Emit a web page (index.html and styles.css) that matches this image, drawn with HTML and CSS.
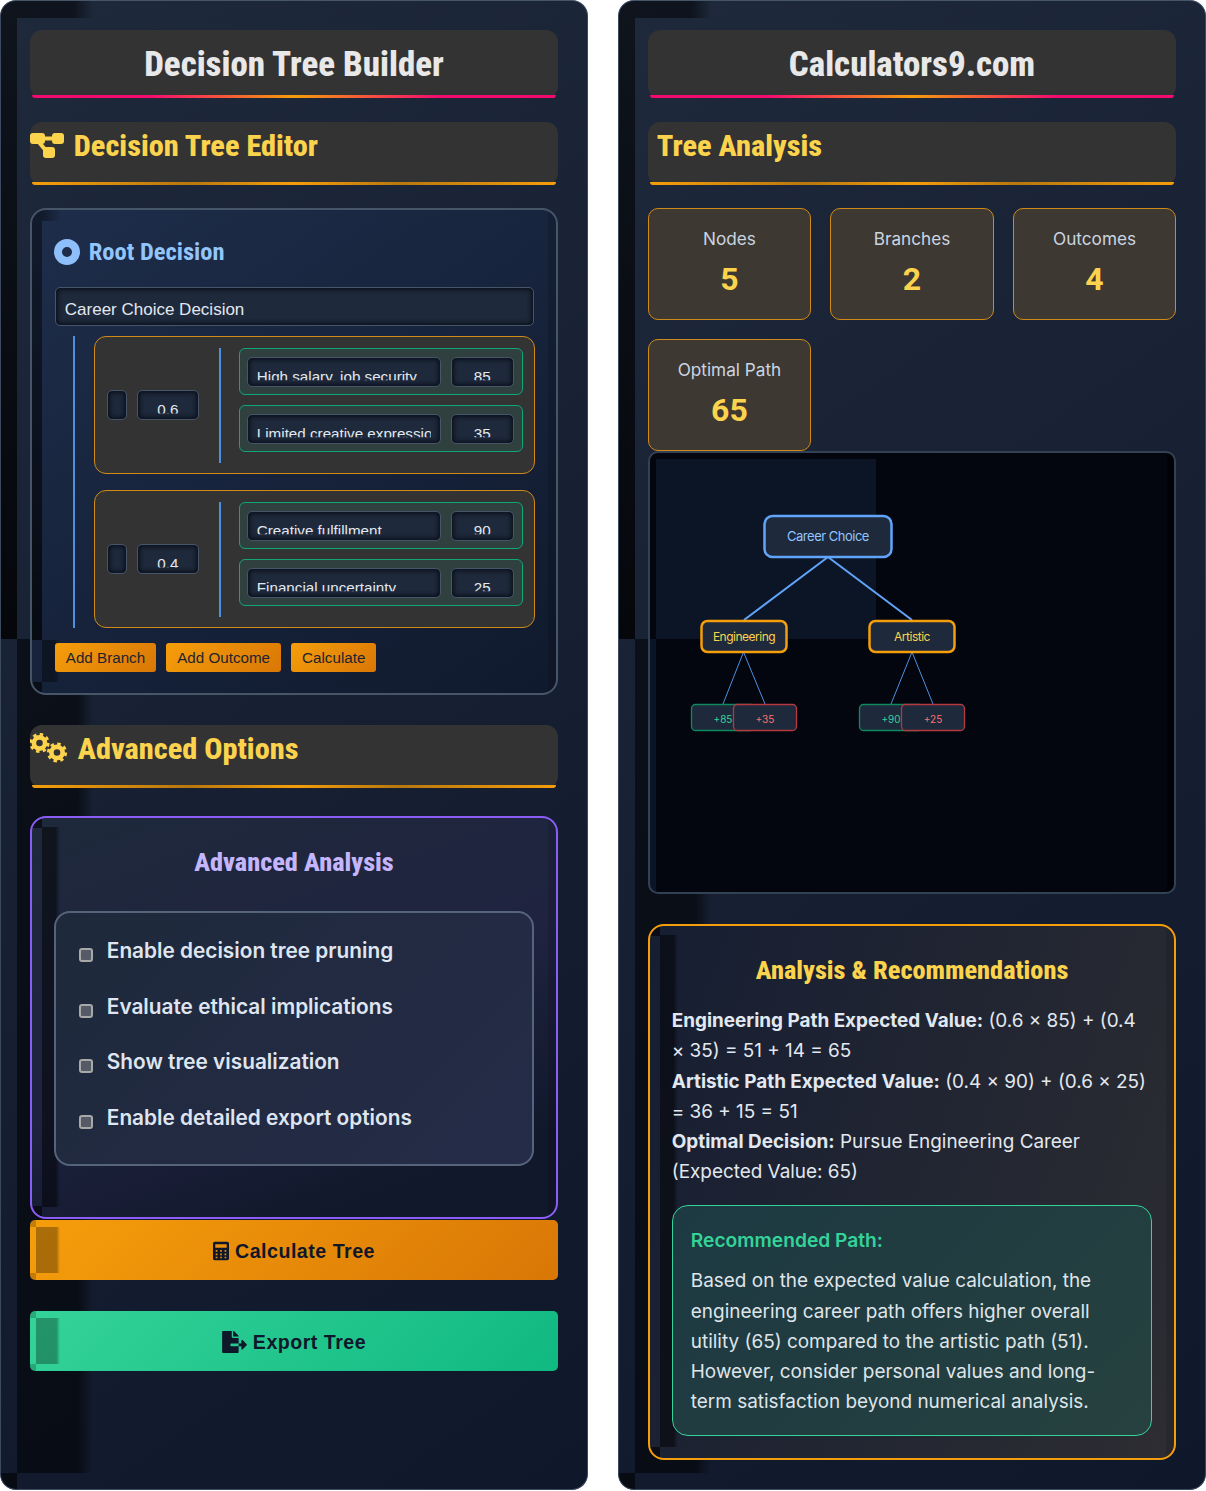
FILE: index.html
```html
<!DOCTYPE html>
<html lang="en">
<head>
	<meta charset="UTF-8">
	<title>Decision Tree Builder</title>
	<link rel="stylesheet" href="styles.css">
</head>
<body>
	<div class="page">
		<section class="panel">
			<h1 class="page-title">Decision Tree Builder</h1>
			<h2 class="section-title">
				<svg class="icon-diagram" viewBox="0 0 34 25">
					<line class="diagram-link" x1="10" y1="5.5" x2="26" y2="5.5"/>
					<line class="diagram-link" x1="8" y1="8" x2="17" y2="19"/>
					<rect x="0" y="0" width="15" height="11" rx="3"/>
					<rect x="22" y="0" width="12" height="11" rx="3"/>
					<rect x="13" y="14" width="12" height="11" rx="3"/>
				</svg>
				Decision Tree Editor
			</h2>

			<div class="tree-card">
				<h3 class="root-title">
					<svg class="icon-dot" viewBox="0 0 26 26"><path fill-rule="evenodd" d="M13 0a13 13 0 1 0 0 26a13 13 0 1 0 0-26zM13 8a5 5 0 1 1 0 10a5 5 0 1 1 0-10z"/></svg>
					Root Decision
				</h3>
				<input class="field-root" type="text" value="Career Choice Decision">
				<div class="branch-list">
					<div class="branch">
						<div class="field field-tiny"><input type="text"></div>
						<div class="field field-prob"><input type="text" value="0.6"></div>
						<div class="outcome-list">
							<div class="outcome">
								<div class="field field-name"><input type="text" value="High salary, job security"></div>
								<div class="field field-num"><input type="text" value="85"></div>
							</div>
							<div class="outcome">
								<div class="field field-name"><input type="text" value="Limited creative expression"></div>
								<div class="field field-num"><input type="text" value="35"></div>
							</div>
						</div>
					</div>
					<div class="branch">
						<div class="field field-tiny"><input type="text"></div>
						<div class="field field-prob"><input type="text" value="0.4"></div>
						<div class="outcome-list">
							<div class="outcome">
								<div class="field field-name"><input type="text" value="Creative fulfillment"></div>
								<div class="field field-num"><input type="text" value="90"></div>
							</div>
							<div class="outcome">
								<div class="field field-name"><input type="text" value="Financial uncertainty"></div>
								<div class="field field-num"><input type="text" value="25"></div>
							</div>
						</div>
					</div>
				</div>
				<div class="tool-row">
					<button class="tool-btn">Add Branch</button>
					<button class="tool-btn">Add Outcome</button>
					<button class="tool-btn">Calculate</button>
				</div>
			</div>

			<h2 class="section-title section-adv">
				<svg class="icon-cogs" viewBox="0 0 38 31">
					<circle class="cog-ring" cx="9.5" cy="10" r="5.6"/>
					<circle class="cog-teeth" cx="9.5" cy="10" r="8.6"/>
					<circle class="cog-ring" cx="27" cy="19.5" r="5.6"/>
					<circle class="cog-teeth" cx="27" cy="19.5" r="8.6"/>
				</svg>
				Advanced Options
			</h2>

			<div class="adv-card">
				<h3 class="adv-title">Advanced Analysis</h3>
				<div class="option-box">
					<label class="option"><input type="checkbox">Enable decision tree pruning</label>
					<label class="option"><input type="checkbox">Evaluate ethical implications</label>
					<label class="option"><input type="checkbox">Show tree visualization</label>
					<label class="option"><input type="checkbox">Enable detailed export options</label>
				</div>
			</div>

			<button class="big-btn btn-calc">
				<svg class="icon-calc" viewBox="0 0 448 512"><path fill-rule="evenodd" d="M48 0H400C426 0 448 22 448 48V464C448 490 426 512 400 512H48C22 512 0 490 0 464V48C0 22 22 0 48 0zM64 64V168H384V64zM76 228V276H124V228zM200 228V276H248V228zM324 228V276H372V228zM76 324V372H124V324zM200 324V372H248V324zM324 324V372H372V324zM76 420V460H124V420zM200 420V460H248V420zM324 420V460H372V420z"/></svg>
				Calculate Tree
			</button>
			<button class="big-btn btn-export">
				<svg class="icon-export" viewBox="0 0 576 512"><path d="M384 121.9c0-6.3-2.5-12.4-7-16.9L279.1 7c-4.5-4.5-10.6-7-17-7H256v128h128v-6.1zM571 308l-95.7-96.4c-10.1-10.1-27.4-3-27.4 11.3V288h-64v64h64v65.2c0 14.3 17.3 21.4 27.4 11.3L571 332c6.6-6.6 6.6-17.4 0-24zm-379 28v-32c0-8.8 7.2-16 16-16h176V160H248c-13.2 0-24-10.8-24-24V0H24C10.7 0 0 10.7 0 24v464c0 13.3 10.7 24 24 24h336c13.3 0 24-10.7 24-24V352H208c-8.8 0-16-7.2-16-16z"/></svg>
				Export Tree
			</button>
		</section>

		<section class="panel">
			<h1 class="page-title">Calculators9.com</h1>
			<h2 class="section-title">Tree Analysis</h2>

			<div class="stat-grid">
				<div class="stat"><div class="stat-label">Nodes</div><div class="stat-value">5</div></div>
				<div class="stat"><div class="stat-label">Branches</div><div class="stat-value">2</div></div>
				<div class="stat"><div class="stat-label">Outcomes</div><div class="stat-value">4</div></div>
				<div class="stat"><div class="stat-label">Optimal Path</div><div class="stat-value">65</div></div>
			</div>

			<div class="tree-view">
				<svg class="tree-svg" viewBox="0 0 524 439">
					<line class="link-main" x1="178" y1="104" x2="94" y2="167"/>
					<line class="link-main" x1="178" y1="104" x2="262" y2="167"/>
					<line class="link-thin" x1="93.5" y1="199" x2="73" y2="251"/>
					<line class="link-thin" x1="93.5" y1="199" x2="115" y2="251"/>
					<line class="link-thin" x1="262" y1="199" x2="241" y2="251"/>
					<line class="link-thin" x1="262" y1="199" x2="283" y2="251"/>
					<rect class="node node-root" x="114.5" y="63" width="127" height="41" rx="8"/>
					<text class="label label-root" x="178" y="88">Career Choice</text>
					<rect class="node node-mid" x="51.5" y="168" width="85" height="31" rx="6"/>
					<text class="label label-mid" x="94" y="188">Engineering</text>
					<rect class="node node-mid" x="219.5" y="168" width="85" height="31" rx="6"/>
					<text class="label label-mid" x="262" y="188">Artistic</text>
					<rect class="node node-good" x="41.5" y="251.5" width="63" height="26" rx="4"/>
					<rect class="node node-bad" x="83.5" y="251.5" width="63" height="26" rx="4"/>
					<text class="label label-good" x="73" y="270">+85</text>
					<text class="label label-bad" x="115" y="270">+35</text>
					<rect class="node node-good" x="209.5" y="251.5" width="63" height="26" rx="4"/>
					<rect class="node node-bad" x="251.5" y="251.5" width="63" height="26" rx="4"/>
					<text class="label label-good" x="241" y="270">+90</text>
					<text class="label label-bad" x="283" y="270">+25</text>
				</svg>
			</div>

			<div class="analysis-card">
				<h3 class="analysis-title">Analysis &amp; Recommendations</h3>
				<p class="analysis-text"><strong>Engineering Path Expected Value:</strong> (0.6 × 85) + (0.4 × 35) = 51 + 14 = 65</p>
				<p class="analysis-text"><strong>Artistic Path Expected Value:</strong> (0.4 × 90) + (0.6 × 25) = 36 + 15 = 51</p>
				<p class="analysis-text"><strong>Optimal Decision:</strong> Pursue Engineering Career (Expected Value: 65)</p>
				<div class="recommend">
					<h4 class="recommend-title">Recommended Path:</h4>
					<p class="recommend-text">Based on the expected value calculation, the engineering career path offers higher overall utility (65) compared to the artistic path (51). However, consider personal values and long-term satisfaction beyond numerical analysis.</p>
				</div>
			</div>
		</section>
	</div>
</body>
</html>
```

FILE: styles.css
```css
* {box-sizing: border-box;}
body,h1,h2,h3,h4,p {margin: 0;padding: 0;}
body {background: #fff;font-family: "Inter", "Liberation Sans", sans-serif;color: #e2e8f0;}

.page {display: grid;grid-template-columns: 588px 588px;gap: 30px;align-items: start;}

/* panel: the dark bands are the broken inset shadow seen in the shot */
.panel {
	height: 1490px;
	padding: 29px 28.8px;
	border: 1px solid #3c4a60;
	border-top-color: #475569;
	border-radius: 16px;
	background-color: #1e293b;
	background-image:
		linear-gradient(rgba(0,0,0,.5), rgba(0,0,0,.8)),
		linear-gradient(90deg, rgba(0,0,0,.5) 75%, transparent),
		linear-gradient(90deg, rgba(0,0,0,.55) 80%, transparent),
		linear-gradient(rgba(0,0,0,.6), rgba(0,0,0,.6)),
		linear-gradient(145deg, #1e293b, #0f172a);
	background-size: 16px 638px, 76px 17px, 76px 834px, 16px 17px, 100% 100%;
	background-position: 0 0, 16px 0, 16px 638px, 0 1472px, 0 0;
	background-repeat: no-repeat;
}

.page-title {
	position: relative;
	height: 68px;
	margin-bottom: 24px;
	padding-top: 12px;
	border-radius: 12px;
	background: #333;
	text-align: center;
	font: 800 34.9px/46px "Roboto Condensed", "Roboto", sans-serif;
	font-stretch: condensed;
	color: #e8e8e8;
}
.page-title::after {
	content: "";
	position: absolute;
	left: 2px;
	right: 2px;
	bottom: 0;
	height: 3px;
	border-radius: 0 0 6px 6px;
	background: linear-gradient(90deg, #f50a70, #f50a70 22%, #f59e0b 50%, #f50a70 78%, #f50a70);
}

.section-title {
	position: relative;
	display: flex;
	align-items: flex-start;
	height: 63px;
	margin-bottom: 23px;
	padding: 5px 9px 0;
	border-radius: 12px;
	background: #333;
	font: 800 30.3px/38px "Roboto Condensed", "Roboto", sans-serif;
	font-stretch: condensed;
	color: #fcd34d;
}
.section-title::after {
	content: "";
	position: absolute;
	left: 2px;
	right: 2px;
	bottom: 0;
	height: 3px;
	border-radius: 0 0 6px 6px;
	background: linear-gradient(90deg, #f59e0b, #b8780f 30%, #f59e0b 50%, #b8780f 70%, #f59e0b);
}
.section-adv {margin-bottom: 28px;}
.icon-diagram {width: 34px;height: 25px;margin: 6px 10px 0 -9px;fill: #fcd34d;flex: none;}
.diagram-link {stroke: #fcd34d;stroke-width: 4;}
.icon-cogs {width: 38px;height: 31px;margin: 3px 10px 0 -9px;flex: none;}
.cog-ring {fill: none;stroke: #fcd34d;stroke-width: 4.6;}
.cog-teeth {fill: none;stroke: #fcd34d;stroke-width: 3;stroke-dasharray: 3.4 3.35;}

/* tree editor card */
.tree-card {
	height: 487px;
	margin-bottom: 30px;
	padding: 29px 21px 0 23px;
	border: 2px solid #475569;
	border-radius: 16px;
	background-color: #1e293b;
	background-image:
		linear-gradient(rgba(0,0,0,.4), rgba(0,0,0,.7)),
		linear-gradient(90deg, rgba(0,0,0,.4), transparent),
		linear-gradient(90deg, rgba(0,0,0,.4) 70%, transparent),
		linear-gradient(rgba(0,0,0,.15), rgba(0,0,0,.15)),
		linear-gradient(rgba(0,0,0,.6), rgba(0,0,0,.6)),
		linear-gradient(145deg, #1e2d4a, #101a2e);
	background-size: 10px 430px, 20px 11px, 18px 42px, 8px 483px, 10px 11px, 100% 100%;
	background-position: 0 0, 10px 0, 10px 430px, 100% 0, 0 100%, 0 0;
	background-repeat: no-repeat;
}
.root-title {
	display: flex;
	align-items: center;
	gap: 9px;
	height: 26px;
	margin: 0 0 21.5px -1px;
	font: 700 24.5px/26px "Roboto Condensed", "Roboto", sans-serif;
	font-stretch: condensed;
	color: #93c5fd;
}
.icon-dot {width: 26px;height: 26px;fill: #8fbffa;flex: none;}

.field-root {
	display: block;
	width: 479px;
	height: 39px;
	margin-bottom: 10px;
	padding: 10px 9px 2px;
	border: 1px solid #475569;
	border-radius: 5px;
	background: #1e293b;
	box-shadow: inset 0 0 4px 2px #0b111d;
	font: 17px/19px "Liberation Sans", Arial, sans-serif;
	color: #e2e8f0;
	outline: none;
}

/* the small fields cut their text off above the baseline, like in the shot */
.field {
	flex: none;
	height: 30px;
	padding: 10px 9px 0;
	border: 1px solid #475569;
	border-radius: 5px;
	background: #1e293b;
	box-shadow: inset 0 0 4px 2px #0b111d;
}
.field input {
	display: block;
	width: 100%;
	height: 17px;
	padding: 0;
	border: 0;
	outline: none;
	background: none;
	clip-path: inset(0 0 4.7px 0);
	font: 15.2px/17px "Liberation Sans", Arial, sans-serif;
	color: #e2e8f0;
	text-align: inherit;
}
.field-tiny {width: 20px;padding: 10px 2px 0;}
.field-prob {width: 62px;margin-left: 10px;text-align: center;}
.field-name {width: 194px;}
.field-num {width: 63px;text-align: center;}

.branch-list {margin-left: 18px;padding-left: 19px;border-left: 2px solid #4f8fe0;display: flex;flex-direction: column;gap: 16px;}
.branch {
	display: flex;
	align-items: center;
	height: 138px;
	padding: 11.5px 11px 10px 12px;
	border: 1px solid #d18a17;
	border-radius: 12px;
	background: #333;
}
.outcome-list {
	display: flex;
	flex-direction: column;
	gap: 10px;
	align-self: stretch;
	margin-left: 20px;
	padding-left: 18px;
	border-left: 2px solid #4f8fe0;
}
.outcome {
	display: flex;
	gap: 10px;
	width: 284px;
	height: 47px;
	padding: 8px 7px;
	border: 1px solid #10a777;
	border-radius: 6px;
	background: #2f403e;
}

.tool-row {display: flex;gap: 10px;margin-top: 15px;}
.tool-btn {
	height: 29px;
	padding: 0 11px;
	border: 0;
	border-radius: 3px;
	background: linear-gradient(135deg, #f59e0b, #d97706);
	font: 15.2px "Liberation Sans", Arial, sans-serif;
	color: #1e2330;
}

/* advanced card */
.adv-card {
	height: 403px;
	margin-bottom: 1px;
	padding: 27px 22px 0;
	border: 2px solid #8b5cf6;
	border-radius: 16px;
	background-color: #1e293b;
	background-image:
		linear-gradient(rgba(0,0,0,.6), rgba(0,0,0,.6)),
		linear-gradient(90deg, rgba(0,0,0,.5) 75%, transparent),
		linear-gradient(rgba(0,0,0,.6), rgba(0,0,0,.6)),
		linear-gradient(rgba(0,0,0,.12), rgba(0,0,0,.12)),
		linear-gradient(160deg, #1e293b, #1f2340 50%, #11182b 85%);
	background-size: 10px 10px, 18px 380px, 10px 11px, 8px 398px, 100% 100%;
	background-position: 0 0, 10px 9px, 0 100%, 100% 0, 0 0;
	background-repeat: no-repeat;
}
.adv-title {
	margin-bottom: 32px;
	text-align: center;
	font: 800 26.3px/34px "Roboto Condensed", "Roboto", sans-serif;
	font-stretch: condensed;
	color: #c4b5fd;
}
.option-box {
	height: 255px;
	padding: 24px 23px 0;
	border: 2px solid #56647b;
	border-radius: 16px;
	background: linear-gradient(135deg, #1e293b, #252c48);
}
.option {display: flex;align-items: center;gap: 14px;height: 27px;margin-bottom: 28.5px;font-size: 20.8px;font-weight: 600;color: #dfe5f0;}
.option input {
	appearance: none;
	flex: none;
	width: 14px;
	height: 14px;
	margin: 9px 0 0;
	border: 2.5px solid #a8a8a8;
	border-radius: 3px;
	background: #555b66;
}

/* action buttons */
.big-btn {
	display: flex;
	align-items: center;
	justify-content: center;
	gap: 6px;
	width: 100%;
	height: 60px;
	padding: 2px 0 0;
	border: 0;
	border-radius: 5px;
	font: 700 19.6px "Liberation Sans", Arial, sans-serif;
	letter-spacing: .5px;
	color: #0f172a;
	background-size: 6px 7px, 24px 46px, 6px 7px, 100% 100%;
	background-position: 0 0, 6px 7px, 0 100%, 0 0;
	background-repeat: no-repeat;
}
.btn-calc {
	margin-bottom: 31px;
	background-image:
		linear-gradient(rgba(0,0,0,.2), rgba(0,0,0,.2)),
		linear-gradient(90deg, rgba(0,0,0,.3) 85%, transparent),
		linear-gradient(rgba(0,0,0,.2), rgba(0,0,0,.2)),
		linear-gradient(135deg, #f59e0b, #d97706);
}
.btn-export {
	background-image:
		linear-gradient(rgba(0,0,0,.2), rgba(0,0,0,.2)),
		linear-gradient(90deg, rgba(0,0,0,.3) 85%, transparent),
		linear-gradient(rgba(0,0,0,.2), rgba(0,0,0,.2)),
		linear-gradient(135deg, #34d399, #10b981);
}
.icon-calc {width: 16px;height: 20px;fill: #0f172a;flex: none;}
.icon-export {width: 25px;height: 22px;fill: #0f172a;flex: none;}

/* right side stats */
.stat-grid {display: grid;grid-template-columns: repeat(3, 1fr);gap: 19.2px;}
.stat {
	height: 112px;
	padding-top: 19px;
	border: 1px solid #d18a17;
	border-radius: 10px;
	background: #3d3832;
	text-align: center;
}
.stat-label {font-size: 17.2px;line-height: 22px;color: #cbd5e1;}
.stat-value {margin-top: 9px;font: 700 32px/40px "Roboto", sans-serif;color: #fcd34d;}

.tree-view {
	height: 443px;
	margin-bottom: 30px;
	border: 2px solid #334155;
	border-radius: 10px;
	background-color: #03060f;
	background-image:
		linear-gradient(#0c1526, #0c1526),
		linear-gradient(#0c1526, #0c1526),
		linear-gradient(#000208, #000208);
	background-size: 220px 180px, 6px 253px, 7px 100%;
	background-position: 6px 6px, 0 186px, 100% 0;
	background-repeat: no-repeat;
}
.tree-svg {display: block;width: 524px;height: 439px;}
.link-main {stroke: #60a5fa;stroke-width: 2;}
.link-thin {stroke: #4f8fe0;stroke-width: 1;}
.node {fill: #1e293b;}
.node-root {stroke: #60a5fa;stroke-width: 2.5;}
.node-mid {stroke: #f59e0b;stroke-width: 2.5;}
.node-good {stroke: #0f8a60;stroke-width: 1.3;}
.node-bad {stroke: #b5393f;stroke-width: 1.3;}
.label {text-anchor: middle;font-family: "Inter", sans-serif;}
.label-root {font-size: 13px;letter-spacing: -.5px;fill: #93c5fd;}
.label-mid {font-size: 12px;letter-spacing: -.5px;fill: #fcd34d;}
.label-good {font-size: 10px;fill: #34d399;}
.label-bad {font-size: 10px;fill: #f87171;}

/* analysis */
.analysis-card {
	height: 536px;
	padding: 27px 22px 0;
	border: 2px solid #f59e0b;
	border-radius: 16px;
	background-color: #1e293b;
	background-image:
		linear-gradient(rgba(0,0,0,.6), rgba(0,0,0,.6)),
		linear-gradient(90deg, rgba(0,0,0,.5) 75%, transparent),
		linear-gradient(rgba(0,0,0,.6), rgba(0,0,0,.6)),
		linear-gradient(rgba(0,0,0,.12), rgba(0,0,0,.12)),
		linear-gradient(110deg, #161e32, #2d2d32);
	background-size: 10px 10px, 18px 512px, 10px 11px, 8px 532px, 100% 100%;
	background-position: 0 0, 10px 9px, 0 100%, 100% 0, 0 0;
	background-repeat: no-repeat;
}
.analysis-title {
	margin-bottom: 19px;
	text-align: center;
	font: 800 26.3px/34px "Roboto Condensed", "Roboto", sans-serif;
	font-stretch: condensed;
	color: #fcd34d;
}
.analysis-text {font-size: 18.9px;line-height: 30.2px;color: #e2e8f0;}
.analysis-text strong {font-weight: 700;}
.recommend {
	height: 231px;
	margin-top: 18px;
	padding: 19px 18px 0;
	border: 1px solid #34d399;
	border-radius: 16px;
	background: linear-gradient(135deg, #1d3942, #26413f);
}
.recommend-title {margin-bottom: 11px;font-size: 19.2px;line-height: 30px;font-weight: 600;color: #34d399;}
.recommend-text {font-size: 18.95px;line-height: 30.2px;color: #dfe5ea;}
```
